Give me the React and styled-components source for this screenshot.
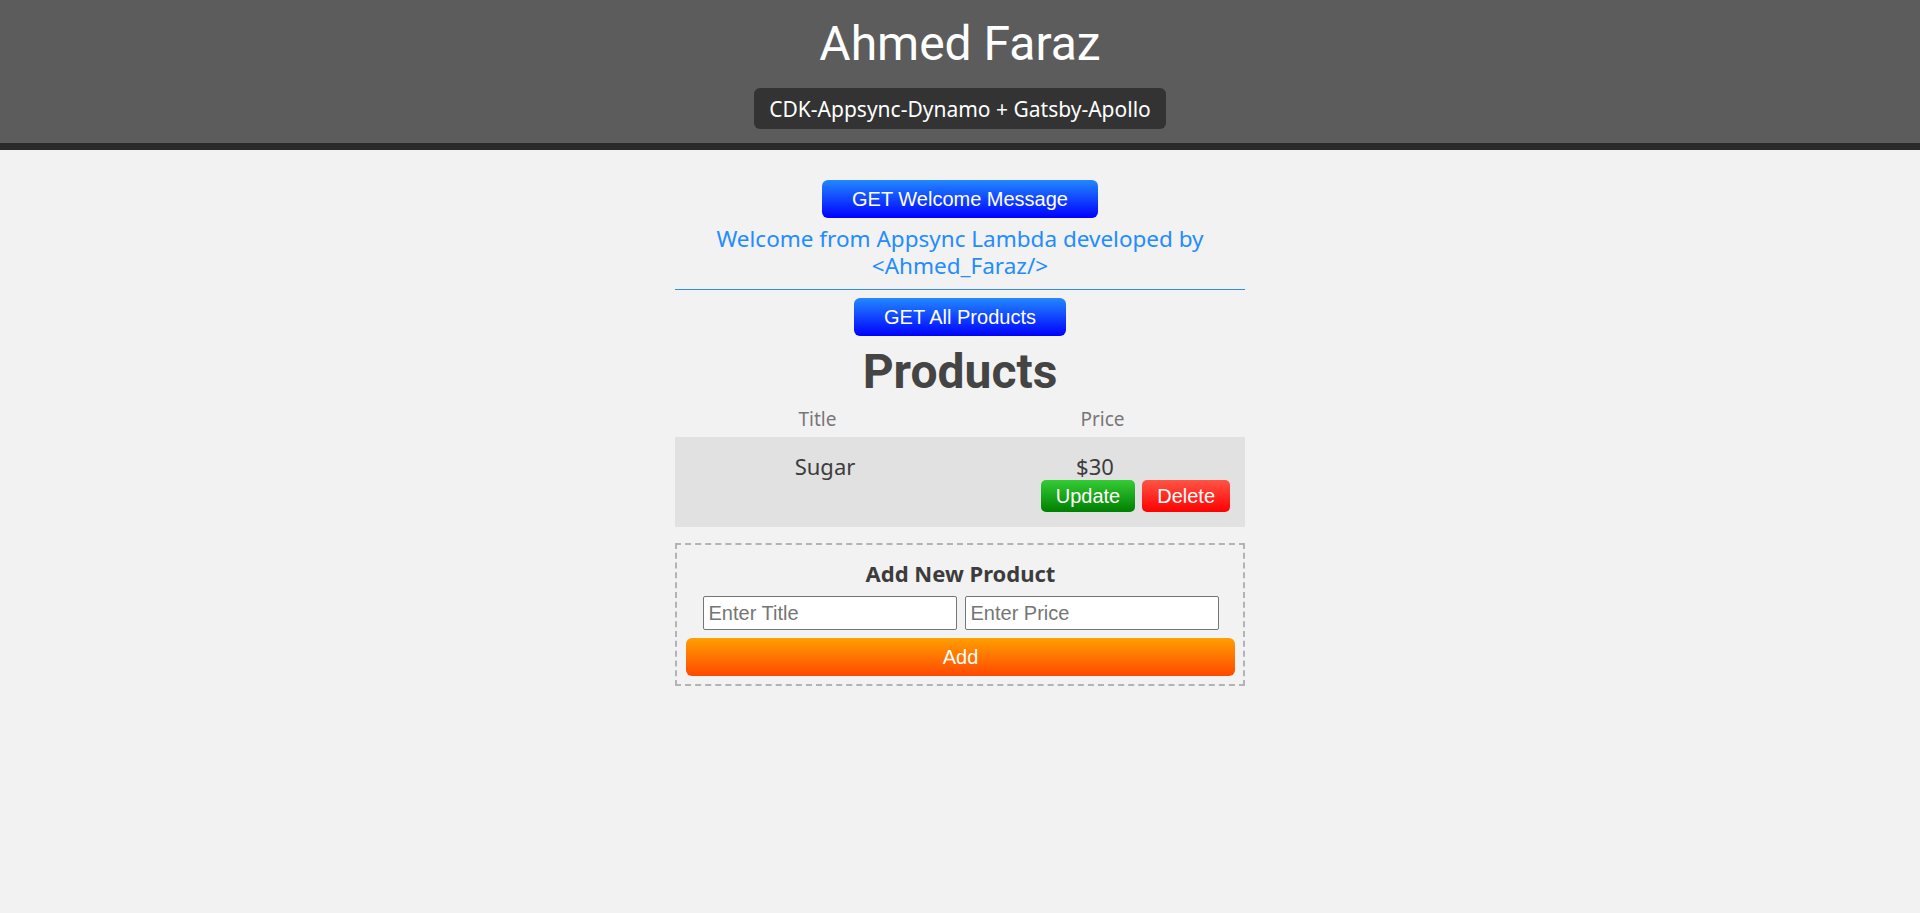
import React from "react";
import styled, { createGlobalStyle } from "styled-components";

const GlobalStyle = createGlobalStyle`
  *, *::before, *::after { box-sizing: border-box; }
  html, body { margin: 0; padding: 0; background: #f2f2f2; }
  body {
    font-family: "Noto Sans", "DejaVu Sans", sans-serif;
    color: #3c3c3c;
  }
`;

const gradients = {
  blue: "linear-gradient(to bottom, #2289ff 0%, #0000ff 100%)",
  green: "linear-gradient(to bottom, #35cc35 0%, #007f00 100%)",
  red: "linear-gradient(to bottom, #ff5546 0%, #ff0000 100%)",
  orange: "linear-gradient(to bottom, #ffa000 0%, #ff4800 100%)",
};

const Page = styled.div`
  min-height: 913px;
  background: #f2f2f2;
`;

const Header = styled.header`
  height: 150px;
  background: #5c5c5c;
  border-bottom: 7px solid #2a2a2a;
  display: flex;
  flex-direction: column;
  align-items: center;
  padding-top: 16px;
`;

const SiteTitle = styled.h1`
  margin: 0;
  font-family: Roboto, "Noto Sans", sans-serif;
  font-weight: 400;
  font-size: 48px;
  line-height: 56px;
  color: #ffffff;
`;

const Badge = styled.div`
  margin-top: 16px;
  height: 41px;
  padding: 0 15px;
  display: inline-flex;
  align-items: center;
  background: #333333;
  border-radius: 6px;
  color: #ffffff;
  font-size: 21px;
`;

const Main = styled.main`
  width: 570px;
  margin: 30px auto 0;
  display: flex;
  flex-direction: column;
  align-items: center;
`;

const ActionButton = styled.button`
  height: ${(p) => (p.$small ? 32 : 38)}px;
  padding: 0 ${(p) => (p.$small ? 15 : 30)}px;
  border: none;
  border-radius: ${(p) => (p.$small ? 5 : 6)}px;
  background: ${(p) => gradients[p.$variant || "blue"]};
  color: #ffffff;
  font-family: "Liberation Sans", Arial, sans-serif;
  font-size: 20px;
  line-height: 1;
  cursor: pointer;
  width: ${(p) => (p.$block ? "100%" : "auto")};
`;

const WelcomeText = styled.p`
  margin: 7px 0 0;
  font-size: 22.5px;
  line-height: 27px;
  color: #238cff;
  text-align: center;
`;

const Divider = styled.hr`
  width: 100%;
  margin: 10px 0 8px;
  border: none;
  border-top: 1px solid #2f8ee8;
`;

const ProductsHeading = styled.h2`
  margin: 8px 0 0;
  font-family: Roboto, "Noto Sans", sans-serif;
  font-weight: 700;
  font-size: 48px;
  line-height: 56px;
  color: #444444;
`;

const Table = styled.div`
  width: 100%;
  display: flex;
  flex-direction: column;
`;

const HeadRow = styled.div`
  display: grid;
  grid-template-columns: 1fr 1fr;
  height: 37px;
  align-items: center;
  text-align: center;
  font-size: 19px;
  color: #777777;
`;

const DataRow = styled.div`
  display: grid;
  grid-template-columns: 1fr 1fr;
  padding: 15px;
  background: #e1e1e1;
  font-size: 22px;
  color: #3c3c3c;
`;

const NameCell = styled.div`
  text-align: center;
  line-height: 28px;
`;

const PriceCell = styled.div`
  display: flex;
  flex-direction: column;
  align-items: center;
`;

const PriceText = styled.span`
  line-height: 28px;
`;

const RowActions = styled.div`
  align-self: flex-end;
  display: flex;
  gap: 7px;
`;

const AddBox = styled.section`
  width: 100%;
  margin-top: 16px;
  border: 2px dashed #b3b3b3;
  padding: 13px 8px 8px 9px;
  display: flex;
  flex-direction: column;
  align-items: center;
`;

const AddHeading = styled.h3`
  margin: 0 0 8px;
  font-size: 22px;
  line-height: 30px;
  font-weight: 700;
  color: #3c3c3c;
`;

const InputRow = styled.div`
  display: flex;
  gap: 8px;
  margin-bottom: 8px;
`;

const TextInput = styled.input`
  width: 254px;
  height: 34px;
  padding: 0 5px;
  border: 1px solid #767676;
  border-radius: 2px;
  background: #ffffff;
  font-family: "Liberation Sans", Arial, sans-serif;
  font-size: 20px;
  color: #222;
  &::placeholder { color: #757575; }
`;

export default function App() {
  return (
    <Page>
      <GlobalStyle />
      <Header>
        <SiteTitle>Ahmed Faraz</SiteTitle>
        <Badge>CDK-Appsync-Dynamo + Gatsby-Apollo</Badge>
      </Header>
      <Main>
        <ActionButton $variant="blue">GET Welcome Message</ActionButton>
        <WelcomeText>
          Welcome from Appsync Lambda developed by &lt;Ahmed_Faraz/&gt;
        </WelcomeText>
        <Divider />
        <ActionButton $variant="blue">GET All Products</ActionButton>
        <ProductsHeading>Products</ProductsHeading>
        <Table>
          <HeadRow>
            <div>Title</div>
            <div>Price</div>
          </HeadRow>
          <DataRow>
            <NameCell>Sugar</NameCell>
            <PriceCell>
              <PriceText>$30</PriceText>
              <RowActions>
                <ActionButton $small $variant="green">Update</ActionButton>
                <ActionButton $small $variant="red">Delete</ActionButton>
              </RowActions>
            </PriceCell>
          </DataRow>
        </Table>
        <AddBox>
          <AddHeading>Add New Product</AddHeading>
          <InputRow>
            <TextInput placeholder="Enter Title" />
            <TextInput placeholder="Enter Price" />
          </InputRow>
          <ActionButton $block $variant="orange">Add</ActionButton>
        </AddBox>
      </Main>
    </Page>
  );
}
